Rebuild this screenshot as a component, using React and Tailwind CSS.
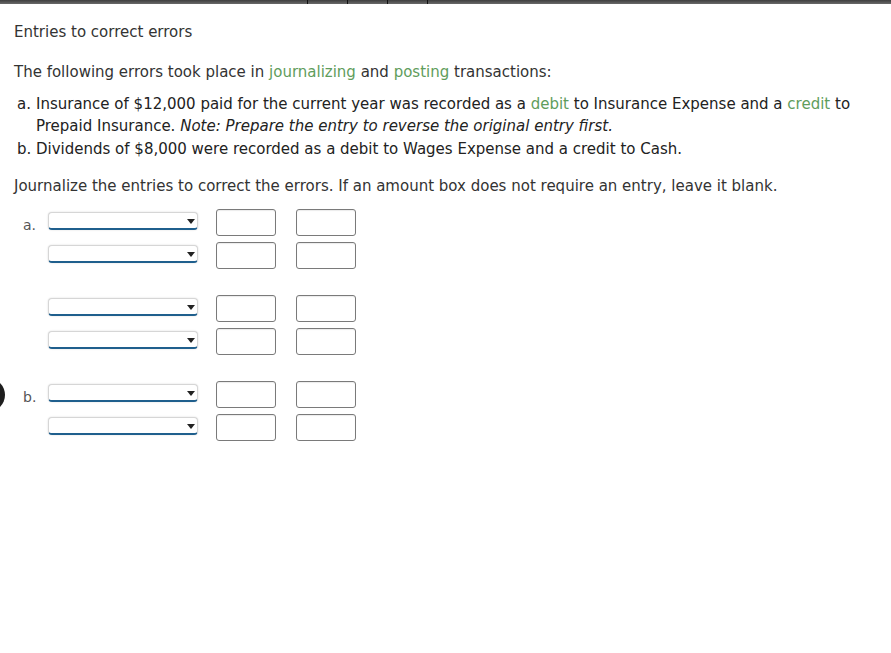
import React from 'react'

const font = { fontFamily: '"DejaVu Sans", Verdana, sans-serif' }

const SelectBox = () => (
  <div className="relative mt-[3px] w-[150px] h-[18px] rounded-[4px] border border-[#d6d6d6] border-b-2 border-b-[#1f5f8d] bg-white shadow-[0_0_2px_rgba(0,0,0,0.15)]">
    <span className="absolute right-[2px] top-[6px] w-0 h-0 border-l-[4px] border-r-[4px] border-t-[5px] border-l-transparent border-r-transparent border-t-[#222]" />
  </div>
)

const AmountBox = () => (
  <div className="w-[60px] h-[27px] rounded-[3px] border border-[#7a7a7a] bg-white shadow-[inset_0_1px_1px_rgba(0,0,0,0.08)]" />
)

const EntryRow = ({ label }) => (
  <div className="flex items-start h-[27px]">
    <div className="w-[34px] h-[27px] pl-[9px] pt-[6px] text-[14px] leading-[20px] text-[#555]">{label}</div>
    <SelectBox />
    <div className="ml-[18px]"><AmountBox /></div>
    <div className="ml-[20px]"><AmountBox /></div>
  </div>
)

const EntryGroup = ({ label }) => (
  <div className="flex flex-col gap-[6px]">
    <EntryRow label={label} />
    <EntryRow label="" />
  </div>
)

export default function App() {
  return (
    <div className="relative min-h-[653px] bg-white" style={font}>
      {/* top strip */}
      <div className="flex h-[4px] bg-gradient-to-b from-[#3e3e3e] to-[#6a6a6a]">
        <div className="w-[307px]" />
        <div className="w-[40px] border-l border-[#111]" />
        <div className="w-[40px] border-l border-[#111]" />
        <div className="w-[40px] border-l border-[#111]" />
        <div className="w-[40px] border-l border-[#111]" />
      </div>

      <div className="pl-[14px] pt-[17px] text-[15px] leading-[22px]">
        <h1 className="text-[#333]">Entries to correct errors</h1>

        <p className="mt-[18px] text-[#333]">
          The following errors took place in <span className="text-[#5f9d5c]">journalizing</span> and{' '}
          <span className="text-[#5f9d5c]">posting</span> transactions:
        </p>

        <ol className="mt-[10px] text-[#222]">
          <li className="flex">
            <span className="w-[22px] pl-[3px] shrink-0">a.</span>
            <span className="w-[830px]">
              Insurance of $12,000 paid for the current year was recorded as a{' '}
              <span className="text-[#5f9d5c]">debit</span> to Insurance Expense and a{' '}
              <span className="text-[#5f9d5c]">credit</span> to Prepaid Insurance.{' '}
              <i>Note: Prepare the entry to reverse the original entry first.</i>
            </span>
          </li>
          <li className="flex mt-[1px]">
            <span className="w-[22px] pl-[3px] shrink-0">b.</span>
            <span>Dividends of $8,000 were recorded as a debit to Wages Expense and a credit to Cash.</span>
          </li>
        </ol>

        <p className="mt-[15px] text-[#333]">
          Journalize the entries to correct the errors. If an amount box does not require an entry, leave it blank.
        </p>

        <div className="mt-[12px] flex flex-col gap-[26px]">
          <EntryGroup label="a." />
          <EntryGroup label="" />
          <EntryGroup label="b." />
        </div>
      </div>

      {/* partially hidden marker on left edge */}
      <div className="absolute left-[-29px] top-[378px] w-[34px] h-[34px] rounded-full bg-[#1e1e1e]" />
    </div>
  )
}
